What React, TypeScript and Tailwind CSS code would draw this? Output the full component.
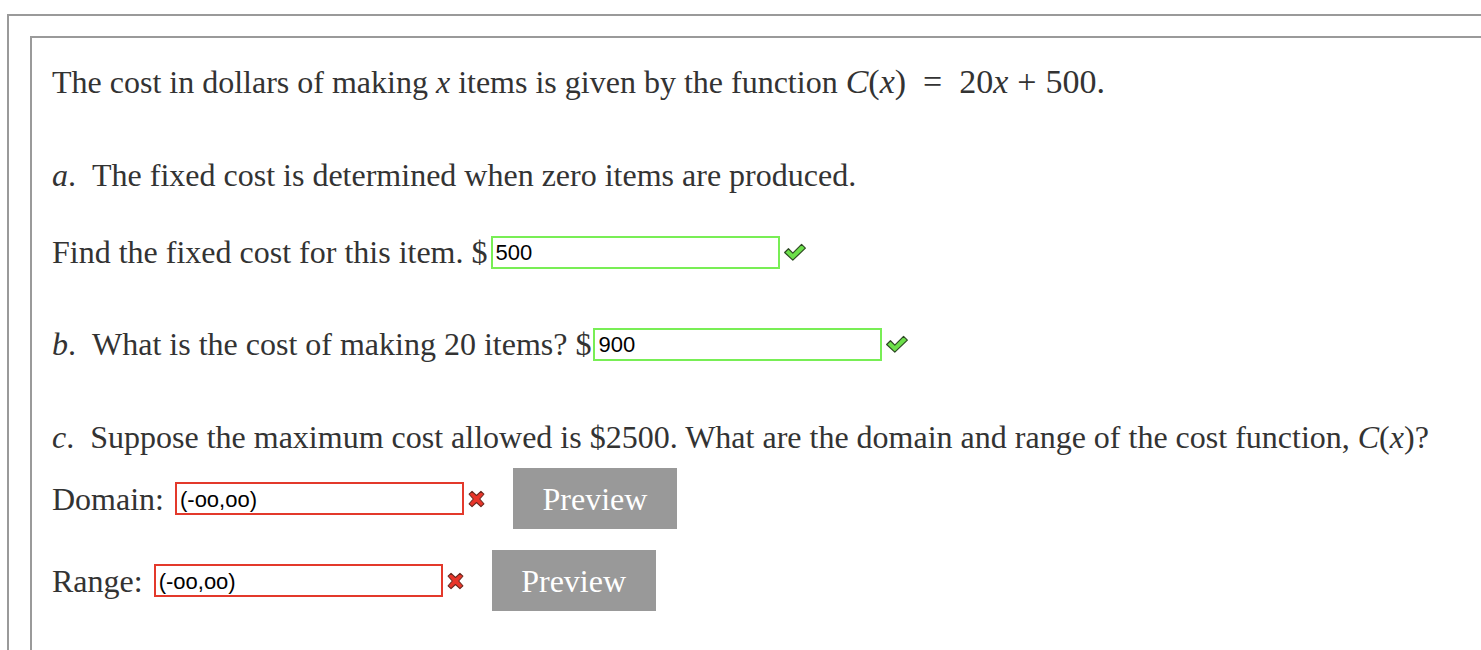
import React from "react";

const serif = { fontFamily: '"Liberation Serif", "Times New Roman", serif' };

function Check() {
  return (
    <svg width="24" height="20" viewBox="0 0 22 18" className="ml-[3px]">
      <path d="M1.5 9.5 L5 6 L9 10 L17 2 L20.5 5.5 L9 16.5 Z" fill="#6ce04a" stroke="#2f4a25" strokeWidth="1.1" strokeLinejoin="round" />
    </svg>
  );
}

function Cross() {
  return (
    <svg width="17" height="18" viewBox="0 0 16 17" className="ml-[4px]">
      <path d="M1 4 L3.8 1.2 L8 5.2 L12.2 1.2 L15 4 L11 8.5 L15 13 L12.2 15.8 L8 11.8 L3.8 15.8 L1 13 L5 8.5 Z" fill="#e8352a" stroke="#6a2a20" strokeWidth="1" strokeLinejoin="round" />
    </svg>
  );
}

function Field({ value, ok }: { value: string; ok: boolean }) {
  return (
    <div
      className={`w-[289px] h-[33px] border-2 ${ok ? "border-[#78ee55]" : "border-[#e3392b]"} bg-white flex items-center pl-[3px] pt-[2px] text-[22px] text-black`}
      style={{ fontFamily: '"Liberation Sans", Arial, sans-serif' }}
    >
      {value}
    </div>
  );
}

function Preview() {
  return (
    <div className="w-[164px] h-[61px] bg-[#999999] text-white text-[32px] flex items-center justify-center" style={serif}>
      Preview
    </div>
  );
}

const I = ({ children }: { children: React.ReactNode }) => <i className="italic">{children}</i>;

export default function App() {
  return (
    <div className="w-[1481px] h-[650px] overflow-hidden bg-white text-[#333333]" style={serif}>
      <div className="pt-[14px] pl-[7px]">
        <div className="border-t-2 border-l-2 border-[#9a9a9a] pt-[20px] pl-[21px] h-[700px]">
          <div className="border-t-2 border-l-2 border-[#9a9a9a] pl-[20px] h-[700px] text-[32px] leading-[36px]">
            <div className="mt-[26px] h-[36px] whitespace-nowrap">
              The cost in dollars of making <I>x</I> items is given by the function{" "}
              <span className="text-[34px]">
                <I>C</I>(<I>x</I>)<span className="mx-[17px]">=</span>20<I>x</I>
                <span className="mx-[9px]">+</span>500.
              </span>
            </div>
            <div className="mt-[57px] h-[36px] whitespace-nowrap">
              <I>a</I>. &nbsp;The fixed cost is determined when zero items are produced.
            </div>
            <div className="mt-[41px] h-[36px] flex items-center whitespace-nowrap">
              <span>Find the fixed cost for this item. $</span>
              <span className="ml-[3px]"><Field value="500" ok /></span>
              <Check />
            </div>
            <div className="mt-[56px] h-[36px] flex items-center whitespace-nowrap">
              <span><I>b</I>. &nbsp;What is the cost of making 20 items? $</span>
              <span className="ml-[2px]"><Field value="900" ok /></span>
              <Check />
            </div>
            <div className="mt-[57px] h-[36px] whitespace-nowrap">
              <I>c</I>. &nbsp;Suppose the maximum cost allowed is $2500. What are the domain and range of the cost function, <I>C</I>(<I>x</I>)?
            </div>
            <div className="mt-[13px] h-[61px] flex items-center whitespace-nowrap">
              <span>Domain:</span>
              <span className="ml-[11px]"><Field value="(-oo,oo)" ok={false} /></span>
              <Cross />
              <span className="ml-[28px]"><Preview /></span>
            </div>
            <div className="mt-[21px] h-[61px] flex items-center whitespace-nowrap">
              <span>Range:</span>
              <span className="ml-[11px]"><Field value="(-oo,oo)" ok={false} /></span>
              <Cross />
              <span className="ml-[28px]"><Preview /></span>
            </div>
          </div>
        </div>
      </div>
    </div>
  );
}
